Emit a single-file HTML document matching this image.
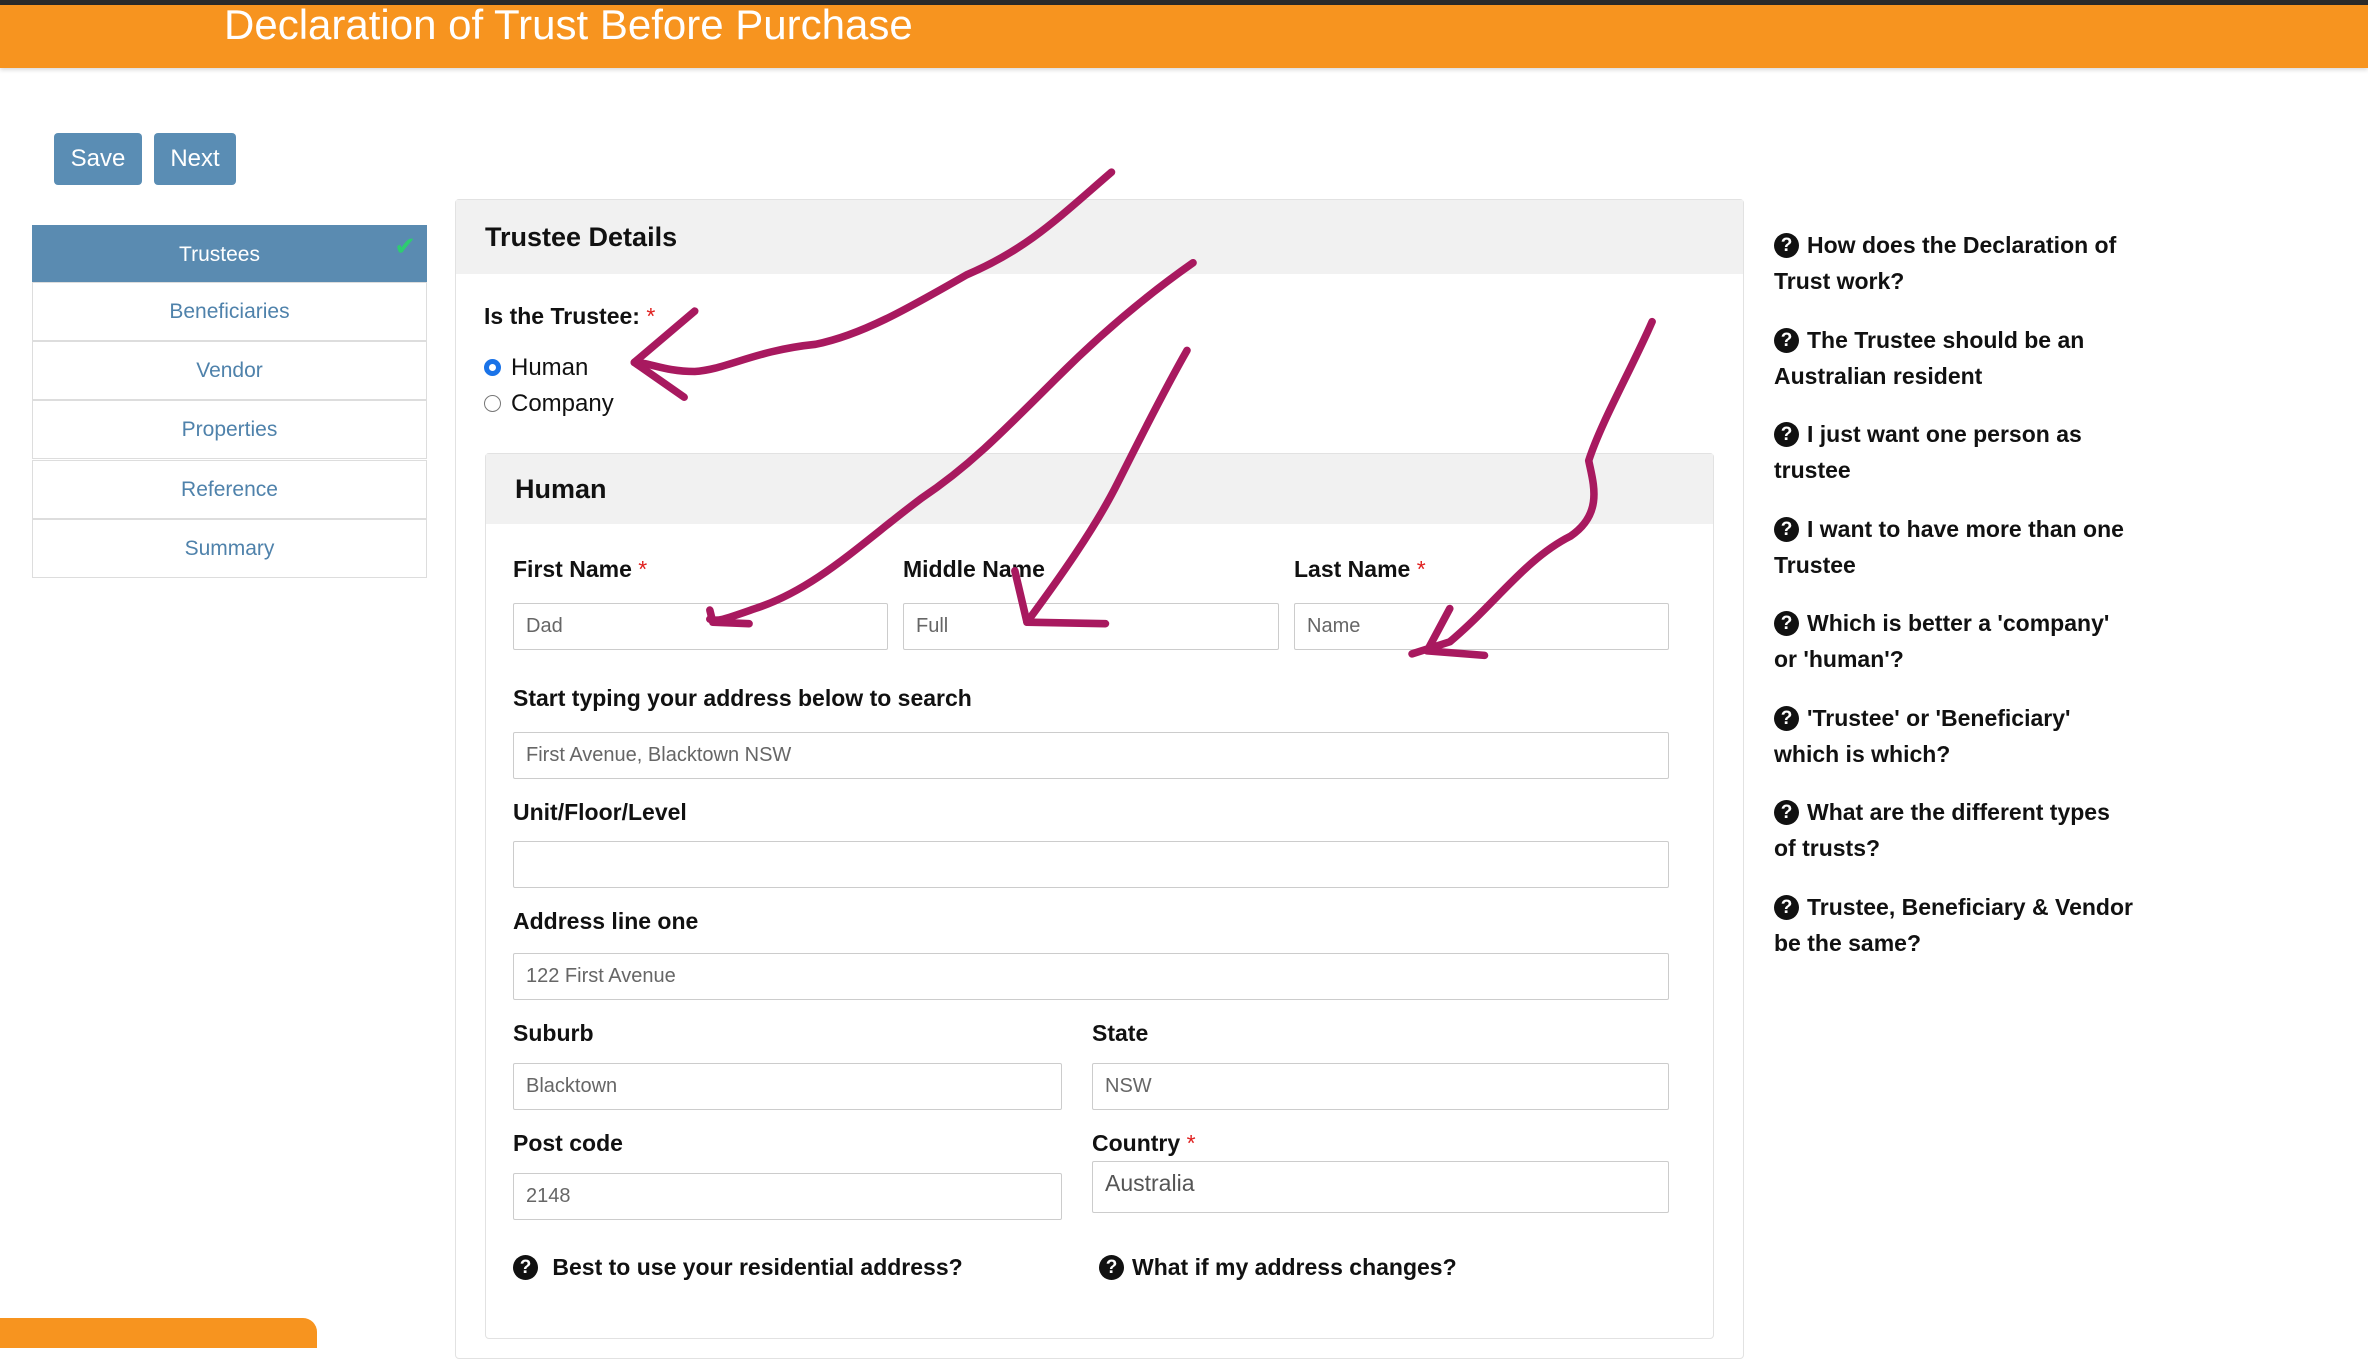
<!DOCTYPE html>
<html><head><meta charset="utf-8"><style>
*{box-sizing:border-box;margin:0;padding:0}
body{width:2368px;height:1341px;overflow:hidden;background:#fff;font-family:"Liberation Sans",Arial,sans-serif;position:relative;color:#111}
.a{position:absolute}
.top{left:0;top:0;width:2368px;height:5px;background:#2a2a2a}
.hdr{left:0;top:5px;width:2368px;height:63px;background:#f7941f;box-shadow:0 2px 4px rgba(0,0,0,.15)}
.title{left:224px;top:-5px;color:#fff;font-size:42px;line-height:50px}
.btn{background:#5a8db4;color:#fff;font-size:24px;border-radius:4px;text-align:center;line-height:51px;height:52px}
.nav{left:32px;width:395px;height:59px;border:1px solid #ddd;color:#4f82ab;font-size:21px;text-align:center;line-height:57px;background:#fff}
.panel{border:1px solid #e2e2e2;border-radius:4px;background:#fff}
.ph{background:#f1f1f1;font-weight:bold;font-size:27px}
.lbl{font-weight:bold;font-size:23px}
.req{color:#e0201f;font-weight:normal}
.inp{border:1px solid #ccc;height:47px;font-size:20px;color:#666;padding-left:12px;line-height:45px;background:#fff;border-radius:2px}
.q{display:inline-block;width:25px;height:25px;border-radius:50%;background:#111;color:#fff;font-size:19px;line-height:25px;text-align:center;font-weight:bold;vertical-align:2px;margin-right:8px}
.rs{left:1774px;width:362px;font-weight:bold;font-size:23px;line-height:36px}
.radio{display:inline-block;width:17px;height:17px;border-radius:50%;border:1px solid #777;vertical-align:-1px;margin-right:10px;background:#fff}
</style></head><body>
<div class="a top"></div>
<div class="a hdr"><div class="a title">Declaration of Trust Before Purchase</div></div>
<div class="a btn" style="left:54px;top:133px;width:88px">Save</div>
<div class="a btn" style="left:154px;top:133px;width:82px">Next</div>

<div class="a nav" style="top:225px;background:#5a8bb1;color:#fff;border-color:#5a8bb1;text-indent:-20px">Trustees<span class="a" style="right:10px;top:-8px;color:#2ecc71;font-size:26px;text-indent:0">✔</span></div>
<div class="a nav" style="top:282px">Beneficiaries</div>
<div class="a nav" style="top:341px">Vendor</div>
<div class="a nav" style="top:400px">Properties</div>
<div class="a nav" style="top:460px">Reference</div>
<div class="a nav" style="top:519px">Summary</div>

<div class="a panel" style="left:455px;top:199px;width:1289px;height:1160px">
  <div class="ph" style="height:74px;padding:22px 29px">Trustee Details</div>
</div>
<div class="a lbl" style="left:484px;top:303px">Is the Trustee: <span class="req">*</span></div>
<div class="a" style="left:484px;top:354px;font-size:24px"><span class="radio" style="border:5px solid #1a73e8;background:#fff;box-shadow:inset 0 0 0 2px #fff"></span>Human</div>
<div class="a" style="left:484px;top:390px;font-size:24px"><span class="radio"></span>Company</div>

<div class="a panel" style="left:485px;top:453px;width:1229px;height:886px">
  <div class="ph" style="height:70px;padding:20px 29px">Human</div>
</div>
<div class="a lbl" style="left:513px;top:556px">First Name <span class="req">*</span></div>
<div class="a lbl" style="left:903px;top:556px">Middle Name</div>
<div class="a lbl" style="left:1294px;top:556px">Last Name <span class="req">*</span></div>
<div class="a inp" style="left:513px;top:603px;width:375px">Dad</div>
<div class="a inp" style="left:903px;top:603px;width:376px">Full</div>
<div class="a inp" style="left:1294px;top:603px;width:375px">Name</div>
<div class="a lbl" style="left:513px;top:685px">Start typing your address below to search</div>
<div class="a inp" style="left:513px;top:732px;width:1156px">First Avenue, Blacktown NSW</div>
<div class="a lbl" style="left:513px;top:799px">Unit/Floor/Level</div>
<div class="a inp" style="left:513px;top:841px;width:1156px"></div>
<div class="a lbl" style="left:513px;top:908px">Address line one</div>
<div class="a inp" style="left:513px;top:953px;width:1156px">122 First Avenue</div>
<div class="a lbl" style="left:513px;top:1020px">Suburb</div>
<div class="a lbl" style="left:1092px;top:1020px">State</div>
<div class="a inp" style="left:513px;top:1063px;width:549px">Blacktown</div>
<div class="a inp" style="left:1092px;top:1063px;width:577px">NSW</div>
<div class="a lbl" style="left:513px;top:1130px">Post code</div>
<div class="a lbl" style="left:1092px;top:1130px">Country <span class="req">*</span></div>
<div class="a inp" style="left:513px;top:1173px;width:549px">2148</div>
<div class="a inp" style="left:1092px;top:1161px;width:577px;height:52px;font-size:23px;color:#555;line-height:42px">Australia</div>
<div class="a lbl" style="left:513px;top:1254px"><span class="q">?</span> Best to use your residential address?</div>
<div class="a lbl" style="left:1099px;top:1254px"><span class="q">?</span>What if my address changes?</div>

<div class="a rs" style="top:227px"><span class="q">?</span>How does the Declaration of Trust work?</div>
<div class="a rs" style="top:322px"><span class="q">?</span>The Trustee should be an Australian resident</div>
<div class="a rs" style="top:416px"><span class="q">?</span>I just want one person as trustee</div>
<div class="a rs" style="top:511px"><span class="q">?</span>I want to have more than one Trustee</div>
<div class="a rs" style="top:605px"><span class="q">?</span>Which is better a 'company' or 'human'?</div>
<div class="a rs" style="top:700px"><span class="q">?</span>'Trustee' or 'Beneficiary' which is which?</div>
<div class="a rs" style="top:794px"><span class="q">?</span>What are the different types of trusts?</div>
<div class="a rs" style="top:889px"><span class="q">?</span>Trustee, Beneficiary &amp; Vendor be the same?</div>

<div class="a" style="left:0;top:1318px;width:317px;height:30px;background:#f7941f;border-radius:0 14px 0 0"></div>

<svg class="a" style="left:0;top:0" width="2368" height="1341" viewBox="0 0 1568 888">
<g fill="none" stroke="#a8195f" stroke-width="5" stroke-linecap="round" stroke-linejoin="round">
<path d="M736 114 C700 145 680 165 640 182 C600 205 570 222 540 228 C500 232 480 245 460 246 C440 246 430 240 420 240"/>
<path d="M460 206 L420 240 L453 263"/>
<path d="M790 174 C760 195 730 220 700 250 C660 290 640 310 610 330 C570 360 540 390 500 403 C480 410 475 412 470 410"/>
<path d="M470 404 L472 412 L496 413"/>
<path d="M786 232 C770 260 750 300 740 320 C725 350 700 385 680 412"/>
<path d="M672 378 L680 412 L732 413"/>
<path d="M1094 213 C1080 245 1060 280 1052 305 C1055 320 1062 340 1040 355 C1010 370 990 400 960 425 L935 433"/>
<path d="M960 403 L945 431 L983 434"/>
</g></svg>
</body></html>
